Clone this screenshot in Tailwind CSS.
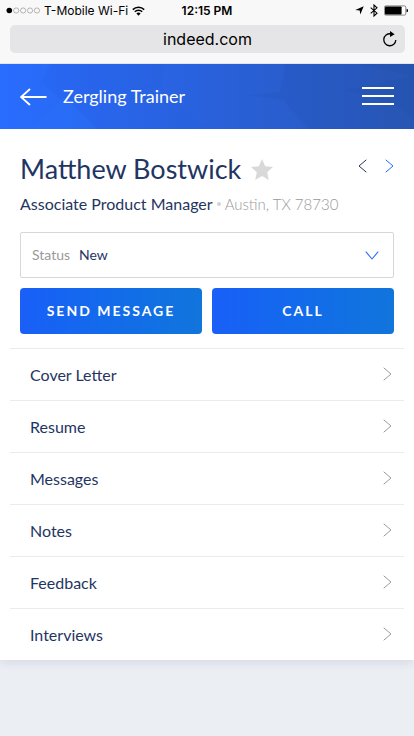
<!DOCTYPE html>
<html lang="en">
<head>
<meta charset="utf-8">
<meta name="viewport" content="width=device-width, initial-scale=1">
<title>Matthew Bostwick</title>
<script src="https://cdn.jsdelivr.net/npm/@tailwindcss/browser@4"></script>
</head>
<body class="flex min-h-screen flex-col bg-linear-to-b from-[#eef2f5] to-[#ebeef3] font-['Lato',sans-serif] text-[#1f3562]">
  <!-- Phone status bar and browser address bar -->
  <div class="border-b border-[#e4e4e8] bg-[#f8f8f8] px-[10px] pb-[10px] font-['Inter',sans-serif] text-black">
    <div class="-mx-1 grid h-[25px] grid-cols-[1fr_auto_1fr] items-center pb-1 text-xs leading-5">
      <div class="flex items-center gap-1">
        <svg class="h-[7px] w-[34px]" viewBox="0 0 34 7" fill="none" stroke="#888" stroke-width=".6" aria-hidden="true">
          <circle cx="3.3" cy="3.5" r="2.8" fill="#000" stroke="none"/><circle cx="10.2" cy="3.5" r="2.6"/><circle cx="17.1" cy="3.5" r="2.6"/><circle cx="24" cy="3.5" r="2.6"/><circle cx="30.9" cy="3.5" r="2.6"/>
        </svg>
        <span class="whitespace-nowrap">T-Mobile Wi-Fi</span>
        <svg class="h-[10px] w-[13px]" viewBox="0 0 13 10" fill="none" stroke="#000" stroke-width="1.6" aria-hidden="true">
          <path d="M.8 3.6a8.2 8.2 0 0 1 11.4 0M2.8 5.8a5.3 5.3 0 0 1 7.4 0"/><path d="M4.4 7.5a3 3 0 0 1 4.2 0L6.5 9.7z" fill="#000" stroke="none"/>
        </svg>
      </div>
      <div class="text-xs font-semibold">12:15 PM</div>
      <div class="flex items-center justify-end gap-[6px]">
        <svg class="h-[9px] w-[9px]" viewBox="0 0 9 9" aria-hidden="true"><path d="M8.7.3 5.3 8.5 4.7 4.4.3 4z"/></svg>
        <svg class="h-[13px] w-[8px]" viewBox="0 0 8 13" fill="none" stroke="#000" stroke-width="1.1" aria-hidden="true"><path d="M.7 3.7 7 9.2 4 12V1l3 2.8L.7 9.3"/></svg>
        <svg class="h-[11px] w-[24px]" viewBox="0 0 24 11" aria-hidden="true"><rect x=".4" y=".9" width="21.4" height="9.2" rx="1.4" fill="#fff" stroke="#555" stroke-width=".7"/><rect x="1" y="1.4" width="16.6" height="8.2" rx=".8"/><path d="M22.6 3.7c2 .3 2 3.3 0 3.6z"/></svg>
      </div>
    </div>
    <div class="-mr-px flex h-7 items-center rounded-[5px] bg-[#e5e5e7] pr-2">
      <span class="flex-1 pl-[22px] text-center text-base leading-6">indeed.com</span>
      <button type="button" aria-label="Reload" class="h-[16px] w-[14px]">
        <svg class="h-[16px] w-[14px]" viewBox="0 0 14 16" fill="none" stroke="#000" stroke-width="1.3" aria-hidden="true"><path d="M7.6 2.8A6 6 0 1 0 12.8 9"/><path d="M7 0 11.6 3.2 7 6z" fill="#000" stroke="none"/></svg>
      </button>
    </div>
  </div>

  <!-- App header with faceted background -->
  <header class="relative flex h-[65px] items-center justify-between overflow-hidden bg-linear-to-r from-[#296dff] via-[#2961dc] to-[#2a58b8] px-5 text-white">
    <svg class="absolute inset-0 h-full w-full" viewBox="0 0 414 65" preserveAspectRatio="none" aria-hidden="true">
      <path d="M50 0H164L160 22 64 38 40 18z" fill="#173fa0" opacity=".04"/>
      <path d="M32 65 64 33 97 65z" fill="#2e78ff" opacity=".2"/>
      <path d="M64 33 97 65H207L180 42 160 22z" fill="#1e4ec0" opacity=".04"/>
      <path d="M286 0H414V65H308L284 36 248 31 280 28z" fill="#1a4096" opacity=".1"/>
      <path d="M360 0H414V12zM395 40 414 56V12L346 26z" fill="#1a3f91" opacity=".08"/>
    </svg>
    <div class="relative flex items-center gap-4">
      <a href="#" aria-label="Back">
        <svg class="h-[18px] w-[27px]" viewBox="0 0 27 18" fill="none" stroke="#fff" stroke-width="1.8" aria-hidden="true"><path d="M1 9H26.5M10 1 1 9 10 17"/></svg>
      </a>
      <h2 class="pb-[2px] text-lg">Zergling Trainer</h2>
    </div>
    <button type="button" aria-label="Menu" class="relative flex w-8 flex-col gap-[6px] pb-px">
      <span class="h-[2px] bg-white"></span><span class="h-[2px] bg-white"></span><span class="h-[2px] bg-white"></span>
    </button>
  </header>

  <main class="bg-white shadow-[0_2px_10px_rgba(50,50,110,0.12)]">
    <section class="px-5 pt-5 pb-[14px]">
      <div class="flex items-center justify-between">
        <div class="flex items-center gap-[10px]">
          <h1 class="text-[27px] leading-10">Matthew Bostwick</h1>
          <button type="button" aria-label="Favorite">
            <svg class="h-[21px] w-[22px]" viewBox="0 0 22 21" fill="#d9d9d9" aria-hidden="true"><path d="m11 0 3.2 7.2 7.8.8-5.8 5.2L17.8 21 11 17l-6.8 4 1.6-7.8L0 8l7.8-.8z"/></svg>
          </button>
        </div>
        <nav class="flex gap-[18px] pb-[6px]" aria-label="Candidates">
          <a href="#" aria-label="Previous candidate"><svg class="h-[14px] w-[9px]" viewBox="0 0 9 14" fill="none" stroke="#1f3562" aria-hidden="true"><path d="M8.3.8 1 7l7.3 6.2"/></svg></a>
          <a href="#" aria-label="Next candidate"><svg class="h-[14px] w-[9px]" viewBox="0 0 9 14" fill="none" stroke="#266bff" aria-hidden="true"><path d="M.7.8 8 7 .7 13.2"/></svg></a>
        </nav>
      </div>
      <p class="mt-[3px] flex items-center leading-6 whitespace-nowrap">
        <span class="text-base">Associate Product Manager</span>
        <span class="mx-1 size-1 rounded-full bg-[#d4d4d4]"></span>
        <span class="text-[15px] font-light text-[#999]">Austin, TX 78730</span>
      </p>
      <div class="relative mt-4 flex h-[46px] items-center rounded-xs border border-[#d7d7d7] text-sm">
        <label for="status" class="pl-[11px] text-[#999]">Status</label>
        <select id="status" class="h-full flex-1 appearance-none pl-[9px] text-[#1f3562] outline-none">
          <option>New</option>
        </select>
        <svg class="pointer-events-none absolute right-[14px] h-[9px] w-[14px]" viewBox="0 0 14 9" fill="none" stroke="#266bff" stroke-width="1.1" aria-hidden="true"><path d="M.8.7 7 8 13.2.7"/></svg>
      </div>
      <div class="mt-[10px] grid grid-cols-2 gap-[10px] text-sm font-bold tracking-[2px] text-white">
        <button type="button" class="h-[46px] rounded bg-linear-to-r from-[#195ff8] to-[#1175dc]">SEND MESSAGE</button>
        <button type="button" class="h-[46px] rounded bg-linear-to-r from-[#195ff8] to-[#1175dc]">CALL</button>
      </div>
    </section>
    <nav class="px-[10px] text-base" aria-label="Application sections">
      <a href="#" class="flex h-[52px] items-center justify-between border-t border-[#ebebeb] pr-3 pb-[2px] pl-5"><span class="pt-[2px]">Cover Letter</span><svg class="h-[14px] w-[9px]" viewBox="0 0 9 14" fill="none" stroke="#999" aria-hidden="true"><path d="M.7.8 8 7 .7 13.2"/></svg></a>
      <a href="#" class="flex h-[52px] items-center justify-between border-t border-[#ebebeb] pr-3 pb-[2px] pl-5"><span class="pt-[2px]">Resume</span><svg class="h-[14px] w-[9px]" viewBox="0 0 9 14" fill="none" stroke="#999" aria-hidden="true"><path d="M.7.8 8 7 .7 13.2"/></svg></a>
      <a href="#" class="flex h-[52px] items-center justify-between border-t border-[#ebebeb] pr-3 pb-[2px] pl-5"><span class="pt-[2px]">Messages</span><svg class="h-[14px] w-[9px]" viewBox="0 0 9 14" fill="none" stroke="#999" aria-hidden="true"><path d="M.7.8 8 7 .7 13.2"/></svg></a>
      <a href="#" class="flex h-[52px] items-center justify-between border-t border-[#ebebeb] pr-3 pb-[2px] pl-5"><span class="pt-[2px]">Notes</span><svg class="h-[14px] w-[9px]" viewBox="0 0 9 14" fill="none" stroke="#999" aria-hidden="true"><path d="M.7.8 8 7 .7 13.2"/></svg></a>
      <a href="#" class="flex h-[52px] items-center justify-between border-t border-[#ebebeb] pr-3 pb-[2px] pl-5"><span class="pt-[2px]">Feedback</span><svg class="h-[14px] w-[9px]" viewBox="0 0 9 14" fill="none" stroke="#999" aria-hidden="true"><path d="M.7.8 8 7 .7 13.2"/></svg></a>
      <a href="#" class="flex h-[52px] items-center justify-between border-t border-[#ebebeb] pr-3 pb-[2px] pl-5"><span class="pt-[2px]">Interviews</span><svg class="h-[14px] w-[9px]" viewBox="0 0 9 14" fill="none" stroke="#999" aria-hidden="true"><path d="M.7.8 8 7 .7 13.2"/></svg></a>
    </nav>
  </main>
</body>
</html>
